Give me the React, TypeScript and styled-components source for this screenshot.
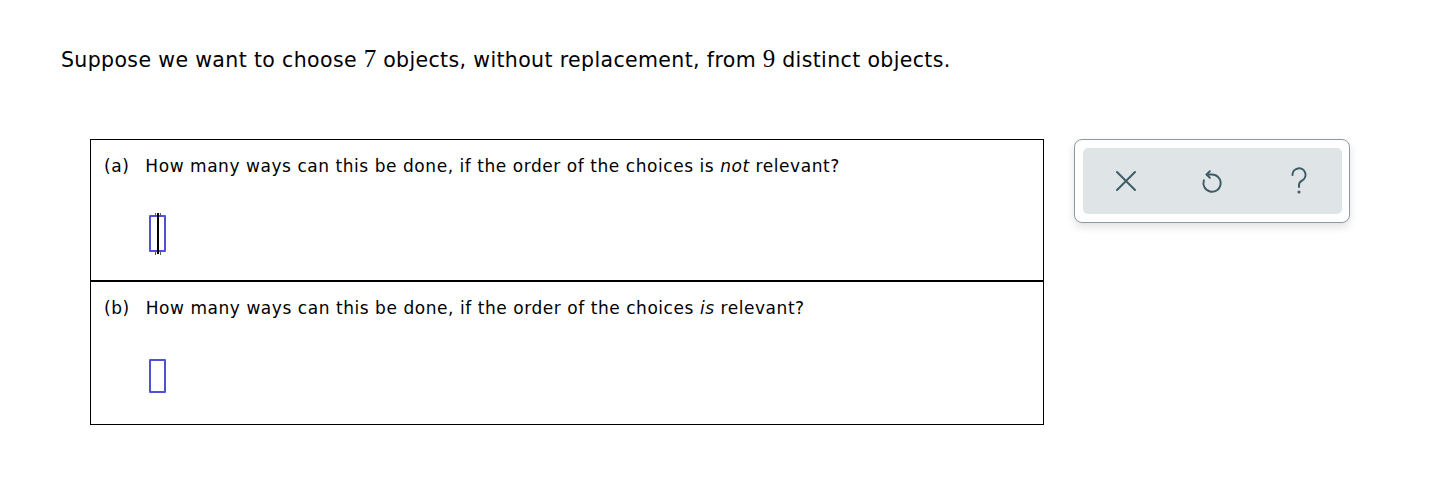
import React from 'react';
import styled, { createGlobalStyle } from 'styled-components';

const GlobalStyle = createGlobalStyle`
  html, body {
    margin: 0;
    padding: 0;
    background: #ffffff;
  }
  body {
    font-family: 'DejaVu Sans', Verdana, sans-serif;
    color: #000;
  }
`;

const Page = styled.div`
  width: 1437px;
  height: 486px;
  box-sizing: border-box;
  padding: 44px 0 0 61px;
`;

const Intro = styled.p`
  margin: 0;
  font-size: 20.5px;
  line-height: 30px;
  letter-spacing: 0.36px;
`;

const MathNum = styled.span`
  font-family: 'Liberation Serif', 'Times New Roman', serif;
  font-size: 25px;
  letter-spacing: 0;
`;

const Body = styled.div`
  display: flex;
  align-items: flex-start;
  gap: 30px;
  margin: 64px 0 0 29px;
`;

const Table = styled.div`
  width: 952px;
  border: 1px solid #000;
  display: flex;
  flex-direction: column;
`;

const Row = styled.div<{ last?: boolean }>`
  height: 142px;
  border-bottom: ${({ last }) => (last ? 'none' : '2px solid #000')};
  box-sizing: border-box;
  padding: 14px 0 0 13px;
`;

const Question = styled.div`
  font-size: 17px;
  line-height: 24px;
  letter-spacing: 0.55px;
  display: flex;
  gap: 16px;
  em {
    font-style: italic;
  }
`;

const AnswerBox = styled.div<{ active?: boolean }>`
  position: relative;
  margin: ${({ active }) => (active ? '37px' : '39px')} 0 0 45px;
  width: 17px;
  height: ${({ active }) => (active ? '37px' : '34px')};
  box-sizing: border-box;
  border: 2px solid #5151d6;
  border-radius: 1px;
`;

const Caret = styled.span`
  position: absolute;
  left: 50%;
  top: -4px;
  bottom: -4px;
  width: 2px;
  margin-left: -1px;
  background: #000;
  &::before,
  &::after {
    content: '';
    position: absolute;
    left: -2px;
    width: 6px;
    height: 2px;
    border-left: 1px dotted #555;
    border-right: 1px dotted #555;
    box-sizing: border-box;
  }
  &::before {
    top: 0;
  }
  &::after {
    bottom: 0;
  }
`;

const ToolPanel = styled.div`
  width: 276px;
  height: 84px;
  box-sizing: border-box;
  border: 1px solid #8c9a9e;
  border-radius: 8px;
  background: #fff;
  padding: 8px 7px 8px 8px;
  box-shadow: 0 4px 8px rgba(0, 0, 0, 0.12);
`;

const ToolBar = styled.div`
  height: 100%;
  background: #dfe5e7;
  border-radius: 5px;
  display: grid;
  grid-template-columns: repeat(3, 1fr);
  align-items: center;
  justify-items: center;
`;

const ToolButton = styled.button`
  background: none;
  border: none;
  padding: 0;
  width: 32px;
  height: 32px;
  display: flex;
  align-items: center;
  justify-content: center;
  color: #3e5c66;
  cursor: pointer;
  svg {
    display: block;
    flex-shrink: 0;
  }
`;

const CloseIcon = () => (
  <svg width="22" height="22" viewBox="0 0 22 22" fill="none" stroke="currentColor" strokeWidth="2" strokeLinecap="round">
    <path d="M2 2L20 20M20 2L2 20" />
  </svg>
);

const UndoIcon = () => (
  <svg width="22" height="27" viewBox="0 0 20 25" fill="none" stroke="currentColor" strokeWidth="1.8" strokeLinecap="round" strokeLinejoin="round">
    <path d="M5 6h5a8 8 0 1 1-7.5 5.3" />
    <path d="M8 3L5 6l3 3" />
  </svg>
);

const HelpIcon = () => (
  <svg width="18" height="28" viewBox="0 0 18 28" fill="none" stroke="currentColor" strokeWidth="2" strokeLinecap="round">
    <path d="M2.5 8a6.5 6.5 0 1 1 9.5 5.6c-2 1.1-3 2.3-3 4.4v2" />
    <circle cx="9" cy="25" r="0.6" fill="currentColor" />
  </svg>
);

export default function App() {
  return (
    <>
      <GlobalStyle />
      <Page>
        <Intro>
          Suppose we want to choose <MathNum>7</MathNum> objects, without replacement, from{' '}
          <MathNum>9</MathNum> distinct objects.
        </Intro>
        <Body>
          <Table>
            <Row>
              <Question>
                <span>(a)</span>
                <span>
                  How many ways can this be done, if the order of the choices is <em>not</em> relevant?
                </span>
              </Question>
              <AnswerBox active>
                <Caret />
              </AnswerBox>
            </Row>
            <Row last>
              <Question>
                <span>(b)</span>
                <span>
                  How many ways can this be done, if the order of the choices <em>is</em> relevant?
                </span>
              </Question>
              <AnswerBox />
            </Row>
          </Table>
          <ToolPanel>
            <ToolBar>
              <ToolButton aria-label="Clear">
                <CloseIcon />
              </ToolButton>
              <ToolButton aria-label="Undo">
                <UndoIcon />
              </ToolButton>
              <ToolButton aria-label="Help">
                <HelpIcon />
              </ToolButton>
            </ToolBar>
          </ToolPanel>
        </Body>
      </Page>
    </>
  );
}
